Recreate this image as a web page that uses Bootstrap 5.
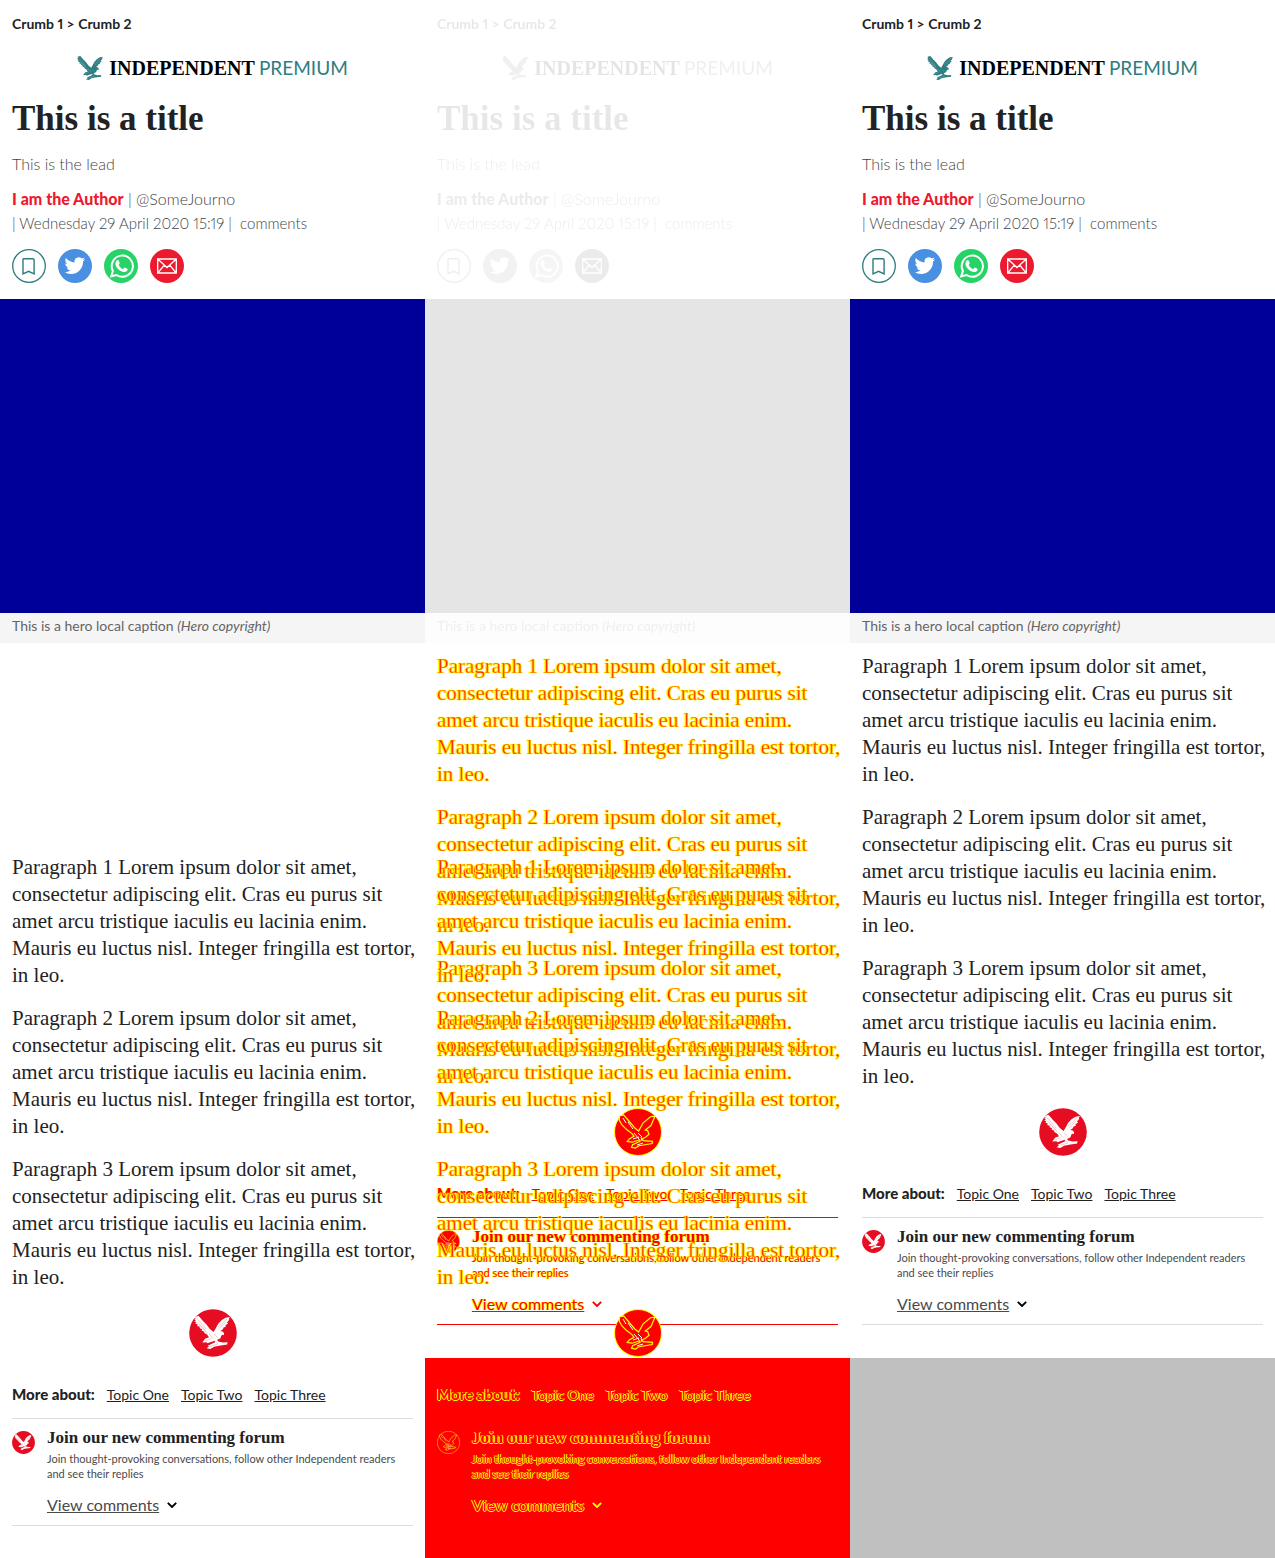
<!DOCTYPE html>
<html lang="en">
<head>
<meta charset="utf-8">
<meta name="viewport" content="width=device-width, initial-scale=1">
<title>Article page: visual comparison</title>
<link href="https://cdn.jsdelivr.net/npm/bootstrap@5.3.0/dist/css/bootstrap.min.css" rel="stylesheet">
<style>
  :root { --ink: #222; --soft: #656565; --teal: #2d7d80; --brand: #ec1a2e; --slit: #fff; }
  body { font-family: Lato, "Open Sans", sans-serif; font-size: 16px; line-height: 24px; font-variant-numeric: proportional-nums; color: var(--ink); background: #fff; }
  a { color: inherit; }
  .serif { font-family: "Liberation Serif", serif; }
  .side { padding-left: 12px; padding-right: 12px; }
  .article-top { padding-top: 12px; padding-bottom: 16px; }
  .crumbs { font-size: 14px; font-weight: 700; }
  .crumbs a, .byline a { text-decoration: none; }
  .brand-line { margin-top: 20px; height: 24px; gap: 6px; }
  .brand-line svg { width: 26px; height: 24px; fill: var(--teal); }
  .brand-name { font-size: 20px; font-weight: 700; color: #000; }
  .brand-tier { font-size: 19px; color: var(--teal); }
  .headline { margin: 19px 0 0; font-size: 35px; line-height: 40px; font-weight: 700; color: var(--ink); }
  .intro { margin: 13px 0 0; color: #444; font-weight: 300; }
  .byline { margin-top: 11px; color: #444; font-weight: 300; }
  .dateline { font-size: 15px; }
  .author { color: var(--brand); font-weight: 900; }
  .share { margin-top: 14px; gap: 12px; }
  .share button { width: 34px; height: 34px; padding: 0; border: 0; background: none; display: block; }
  .share svg { width: 34px; height: 34px; display: block; }
  .hero { aspect-ratio: 425 / 314; background: #000099; }
  .caption { padding-top: 1px; padding-bottom: 5px; background: #f5f5f5; color: var(--soft); font-size: 14px; }
  .ad-slot { height: 201px; }
  .story { padding: 10px 8px 0 12px; font-size: 21px; line-height: 27px; }
  .story p { margin: 0 0 16px; }
  .story p:last-child { margin: 0; }
  .endmark { width: 48px; height: 48px; margin: 18px auto 0; display: block; }
  .topics { margin-top: 25px; gap: 12px; font-size: 14px; }
  .topics strong { font-size: 15px; font-weight: 900; }
  .forum { margin: 11px 12px 33px; padding: 9px 0 8px; border-top: 1px solid #dcdcdc; border-bottom: 1px solid #dcdcdc; gap: 12px; }
  .forum-logo { width: 23px; height: 23px; margin-top: 3px; flex: none; }
  .forum h2 { font-size: 17px; line-height: 20px; font-weight: 700; margin: 0; }
  .forum p { margin: 3px 0 12px; font-size: 11px; line-height: 15px; color: #4a4a4a; }
  .forum button { padding: 0; border: 0; background: none; color: #4a4a4a; font-size: 16px; line-height: 24px; gap: 8px; }
  .disc { fill: #e60d22; --slit: #e60d22; }
  .filler { background: #c0c0c0; }

  /* middle column: unchanged parts are faded, changed parts red and yellow */
  .same { filter: grayscale(1); opacity: .1; }
  .stack { display: grid; }
  .stack > div { grid-area: 1 / 1; min-width: 0; }
  .changed, .changed p, .changed button { color: #f00; text-shadow: 1px 0 #ff0, -1px 0 #ff0; }
  .changed .story p { -webkit-text-stroke: 1px rgba(255, 255, 0, .5); }
  .changed .forum { border-color: #f00; }
  .changed .chev { color: #f00; stroke-width: 1px; }
  .removed { background: #f00; }
  .on-red a, .on-red .text-decoration-underline { text-decoration: none !important; }
  .on-red, .on-red p, .on-red button { color: #f00; text-shadow: 1px 0 #ff0, -1px 0 #ff0, 0 1px #ff0; }
  .on-red .chev { color: #ff0; }
</style>
<script src="https://cdn.jsdelivr.net/npm/bootstrap@5.3.0/dist/js/bootstrap.bundle.min.js"></script>
</head>
<body>
<svg width="0" height="0" class="position-absolute" aria-hidden="true">
  <symbol id="eagle" viewBox="5 7 36 33">
    <path d="M9.6 6.900 5.500 7.900 7 9.300 5.200 10 7 11.500 5.300 12.300 7.500 13.600 6.300 14.600 9 15.700 8 17 11 17.800 10.400 19 13 20.300 12.600 21.600 15 22.400 15.400 24 18 25.600 20 28.300 16 29.800 15.200 31 13.300 33.500 17.600 33.200 18.400 34.200 22 33 25.600 31.800 26.200 33.200 21.800 35.200 18.600 36.700 20 37.500 17.600 39.300 21.300 40 25 37.700 30 36.700 38.200 35.600 38.500 33.300 33.600 33.600 29.300 32.600 28 31 31.500 29.200 32.200 26.800 34 25.500 35 26.300 35.100 24.300 33.600 22.600 31.300 22 34.500 19.700 33.800 18.900 37 17.500 36.300 16.600 39 14.500 38 13.600 40.300 10.700 39.700 10 41 8.100 36.500 8.700 32.500 11.300 29.200 14.800 26.800 19.200 24.600 23 20.800 20 17.500 15.500 14 12Z" stroke="none"/>
    <path fill="none" stroke="var(--slit)" stroke-width=".45" stroke-opacity=".5" d="M8 9.500 17 20M8 12.500l9.500 10M10 15.700l8.500 8.600M38 10l-9 8M37.500 12.800 29.500 20M20 24.600l4 5M25 25l3.500 3.500M16 32l6-2.500M21 37.300l8-2.300M25.800 31.300l2.700 3"/>
  </symbol>
  <symbol id="roundel" viewBox="0 0 48 48">
    <circle cx="24" cy="24" r="23.800"/>
    <use href="#eagle" x="5" y="7" width="36" height="33" fill="#fff"/>
  </symbol>
  <!-- outline version of the roundel for the changed areas -->
  <symbol id="roundel-diff" viewBox="0 0 48 48">
    <circle cx="24" cy="24" r="23.500" fill="#f00" stroke="#ff0"/>
    <path fill="#f00" stroke="#ff0" stroke-width="1.200" d="M9.600 6.900 5.500 7.900 5.300 12.300 8 17 12.600 21.600 18 25.600 20 28.300 15.200 31 13.300 33.500 18.400 34.200 25.600 31.800 26.200 33.200 18.600 36.700 17.600 39.300 21.300 40 25 37.700 38.200 35.600 38.500 33.300 29.300 32.600 28 31 31.500 29.200 35 26.300 33.600 22.600 31.300 22 37 17.500 41 8.100 36.500 8.700 29.200 14.800 24.600 23 20.800 20 14 12Z"/>
    <path fill="none" stroke="#fff" stroke-width="1" d="m9 10 3 5m2-1 5 7m1 4 5 6m-1-6 4 4m-9 2 6-2m-2 8 6-2m-2-6 1 4"/>
  </symbol>
  <symbol id="i-save" viewBox="0 0 34 34">
    <circle cx="17" cy="17" r="16.300" fill="#fff" stroke="#2d7d80" stroke-width="1.300"/>
    <path d="M11.700 9.700h9.200q1.200 0 1.200 1.200V25l-5.500-2.700L11 25V10.400q0-.7.7-.7Z" fill="none" stroke="#2d7d80" stroke-width="1.400"/>
  </symbol>
  <symbol id="i-twitter" viewBox="0 0 34 34">
    <circle cx="17" cy="17" r="17" fill="#4a90e2"/>
    <path fill="#fff" transform="translate(6.500 6.300) scale(.86)" d="M23.950 4.570a10 10 0 0 1-2.820.77 4.960 4.960 0 0 0 2.160-2.720c-.95.550-2 .95-3.130 1.180a4.920 4.920 0 0 0-8.380 4.480C7.690 8.090 4.070 6.130 1.640 3.160a4.820 4.820 0 0 0-.67 2.480c0 1.710.87 3.210 2.190 4.100a4.900 4.900 0 0 1-2.230-.620v.060a4.920 4.920 0 0 0 3.950 4.830 5 5 0 0 1-2.210.080 4.940 4.940 0 0 0 4.600 3.420A9.870 9.870 0 0 1 0 19.540a14 14 0 0 0 7.550 2.210c9.050 0 14-7.500 14-13.980 0-.210 0-.420-.020-.630a9.940 9.940 0 0 0 2.420-2.570Z"/>
  </symbol>
  <symbol id="i-whatsapp" viewBox="0 0 34 34">
    <circle cx="17" cy="17" r="17" fill="#25d366"/>
    <path d="M7.200 27.300 8.900 22A10.600 10.600 0 1 1 12.500 26Z" fill="none" stroke="#fff" stroke-width="2"/>
    <path fill="#fff" d="M13 11.200c.5-.5 1.300-.4 1.600.2l1.100 2.500c.2.500-.9 1.500-1 2 1 2 2.400 3.300 4.400 4.100.5-.1 1.300-1.600 1.800-1.400l2.500 1.200c.4.300.1 1.600-.4 2.200-1.200 1.200-2.900 1.300-4.500.8-3.300-1.100-5.700-3.500-6.800-6.400-.6-1.800-.2-3.900 1.300-5.200Z"/>
  </symbol>
  <symbol id="i-mail" viewBox="0 0 34 34">
    <circle cx="17" cy="17" r="17" fill="#ec1a2e"/>
    <path d="M7.700 10h18.600v14H7.700ZM7.700 10l9.300 8.500 9.300-8.500M7.700 24l6.600-7.800M26.300 24l-6.600-7.800" fill="none" stroke="#fff" stroke-width="1.300"/>
  </symbol>
  <symbol id="i-chev" viewBox="0 0 10 6"><path d="m.8.800 4.200 4.200L9.200.800" fill="none" stroke="currentColor" stroke-width="1.900"/></symbol>
</svg>

<main class="row g-0">
  <!-- before -->
  <section class="col-4" aria-label="Before">
    <header class="article-top side">
      <nav class="crumbs" aria-label="Breadcrumb"><a href="#">Crumb 1</a> &gt; <a href="#">Crumb 2</a></nav>
      <div class="brand-line d-flex justify-content-center align-items-center"><svg aria-hidden="true"><use href="#eagle"/></svg><span><span class="brand-name serif">INDEPENDENT</span> <span class="brand-tier">PREMIUM</span></span></div>
      <h1 class="headline serif">This is a title</h1>
      <p class="intro">This is the lead</p>
      <div class="byline"><div><a href="#" class="author">I am the Author</a> | <a href="#">@SomeJourno</a></div><div class="dateline">| Wednesday 29 April 2020 15:19 |&nbsp; <a href="#">comments</a></div></div>
      <div class="share d-flex">
        <button type="button" aria-label="Save"><svg><use href="#i-save"/></svg></button>
        <button type="button" aria-label="Twitter"><svg><use href="#i-twitter"/></svg></button>
        <button type="button" aria-label="WhatsApp"><svg><use href="#i-whatsapp"/></svg></button>
        <button type="button" aria-label="Email"><svg><use href="#i-mail"/></svg></button>
      </div>
    </header>
    <div class="hero"></div>
    <div class="caption side">This is a hero local caption <em>(Hero copyright)</em></div>
    <div class="ad-slot"></div>
    <div class="story serif">
      <p>Paragraph 1 Lorem ipsum dolor sit amet, consectetur adipiscing elit. Cras eu purus sit amet arcu tristique iaculis eu lacinia enim. Mauris eu luctus nisl. Integer fringilla est tortor, in leo.</p>
      <p>Paragraph 2 Lorem ipsum dolor sit amet, consectetur adipiscing elit. Cras eu purus sit amet arcu tristique iaculis eu lacinia enim. Mauris eu luctus nisl. Integer fringilla est tortor, in leo.</p>
      <p>Paragraph 3 Lorem ipsum dolor sit amet, consectetur adipiscing elit. Cras eu purus sit amet arcu tristique iaculis eu lacinia enim. Mauris eu luctus nisl. Integer fringilla est tortor, in leo.</p>
    </div>
    <svg class="endmark disc" aria-hidden="true"><use href="#roundel"/></svg>
    <div class="topics side d-flex align-items-baseline"><strong>More about:</strong><a href="#">Topic One</a><a href="#">Topic Two</a><a href="#">Topic Three</a></div>
    <div class="forum d-flex">
      <svg class="forum-logo disc" aria-hidden="true"><use href="#roundel"/></svg>
      <div>
        <h2 class="serif">Join our new commenting forum</h2>
        <p>Join thought-provoking conversations, follow other Independent readers and see their replies</p>
        <button type="button" class="d-flex align-items-center"><span class="text-decoration-underline">View comments</span><svg class="chev text-black" width="10" height="6"><use href="#i-chev"/></svg></button>
      </div>
    </div>
  </section>

  <!-- difference -->
  <section class="col-4 d-flex flex-column" aria-label="Difference">
    <div class="same">
      <header class="article-top side">
        <nav class="crumbs" aria-label="Breadcrumb"><a href="#">Crumb 1</a> &gt; <a href="#">Crumb 2</a></nav>
        <div class="brand-line d-flex justify-content-center align-items-center"><svg aria-hidden="true"><use href="#eagle"/></svg><span><span class="brand-name serif">INDEPENDENT</span> <span class="brand-tier">PREMIUM</span></span></div>
        <h1 class="headline serif">This is a title</h1>
        <p class="intro">This is the lead</p>
        <div class="byline"><div><a href="#" class="author">I am the Author</a> | <a href="#">@SomeJourno</a></div><div class="dateline">| Wednesday 29 April 2020 15:19 |&nbsp; <a href="#">comments</a></div></div>
        <div class="share d-flex">
          <button type="button" aria-label="Save"><svg><use href="#i-save"/></svg></button>
          <button type="button" aria-label="Twitter"><svg><use href="#i-twitter"/></svg></button>
          <button type="button" aria-label="WhatsApp"><svg><use href="#i-whatsapp"/></svg></button>
          <button type="button" aria-label="Email"><svg><use href="#i-mail"/></svg></button>
        </div>
      </header>
      <div class="hero"></div>
      <div class="caption side">This is a hero local caption <em>(Hero copyright)</em></div>
    </div>
    <div class="stack flex-grow-1">
      <div class="changed d-flex flex-column">
        <div class="story serif">
          <p>Paragraph 1 Lorem ipsum dolor sit amet, consectetur adipiscing elit. Cras eu purus sit amet arcu tristique iaculis eu lacinia enim. Mauris eu luctus nisl. Integer fringilla est tortor, in leo.</p>
          <p>Paragraph 2 Lorem ipsum dolor sit amet, consectetur adipiscing elit. Cras eu purus sit amet arcu tristique iaculis eu lacinia enim. Mauris eu luctus nisl. Integer fringilla est tortor, in leo.</p>
          <p>Paragraph 3 Lorem ipsum dolor sit amet, consectetur adipiscing elit. Cras eu purus sit amet arcu tristique iaculis eu lacinia enim. Mauris eu luctus nisl. Integer fringilla est tortor, in leo.</p>
        </div>
        <svg class="endmark" aria-hidden="true"><use href="#roundel-diff"/></svg>
        <div class="topics side d-flex align-items-baseline"><strong>More about:</strong><a href="#">Topic One</a><a href="#">Topic Two</a><a href="#">Topic Three</a></div>
        <div class="forum d-flex">
          <svg class="forum-logo" aria-hidden="true"><use href="#roundel-diff"/></svg>
          <div>
            <h2 class="serif">Join our new commenting forum</h2>
            <p>Join thought-provoking conversations, follow other Independent readers and see their replies</p>
            <button type="button" class="d-flex align-items-center"><span class="text-decoration-underline">View comments</span><svg class="chev" width="10" height="6"><use href="#i-chev"/></svg></button>
          </div>
        </div>
        <div class="removed flex-grow-1"></div>
      </div>
      <div class="changed">
        <div class="ad-slot"></div>
        <div class="story serif">
          <p>Paragraph 1 Lorem ipsum dolor sit amet, consectetur adipiscing elit. Cras eu purus sit amet arcu tristique iaculis eu lacinia enim. Mauris eu luctus nisl. Integer fringilla est tortor, in leo.</p>
          <p>Paragraph 2 Lorem ipsum dolor sit amet, consectetur adipiscing elit. Cras eu purus sit amet arcu tristique iaculis eu lacinia enim. Mauris eu luctus nisl. Integer fringilla est tortor, in leo.</p>
          <p>Paragraph 3 Lorem ipsum dolor sit amet, consectetur adipiscing elit. Cras eu purus sit amet arcu tristique iaculis eu lacinia enim. Mauris eu luctus nisl. Integer fringilla est tortor, in leo.</p>
        </div>
        <svg class="endmark" aria-hidden="true"><use href="#roundel-diff"/></svg>
        <div class="on-red">
          <div class="topics side d-flex align-items-baseline"><strong>More about:</strong><a href="#">Topic One</a><a href="#">Topic Two</a><a href="#">Topic Three</a></div>
          <div class="forum d-flex">
            <svg class="forum-logo" aria-hidden="true"><use href="#roundel-diff"/></svg>
            <div>
              <h2 class="serif">Join our new commenting forum</h2>
              <p>Join thought-provoking conversations, follow other Independent readers and see their replies</p>
              <button type="button" class="d-flex align-items-center"><span class="text-decoration-underline">View comments</span><svg class="chev" width="10" height="6"><use href="#i-chev"/></svg></button>
            </div>
          </div>
        </div>
      </div>
    </div>
  </section>

  <!-- after -->
  <section class="col-4 d-flex flex-column" aria-label="After">
    <header class="article-top side">
      <nav class="crumbs" aria-label="Breadcrumb"><a href="#">Crumb 1</a> &gt; <a href="#">Crumb 2</a></nav>
      <div class="brand-line d-flex justify-content-center align-items-center"><svg aria-hidden="true"><use href="#eagle"/></svg><span><span class="brand-name serif">INDEPENDENT</span> <span class="brand-tier">PREMIUM</span></span></div>
      <h1 class="headline serif">This is a title</h1>
      <p class="intro">This is the lead</p>
      <div class="byline"><div><a href="#" class="author">I am the Author</a> | <a href="#">@SomeJourno</a></div><div class="dateline">| Wednesday 29 April 2020 15:19 |&nbsp; <a href="#">comments</a></div></div>
      <div class="share d-flex">
        <button type="button" aria-label="Save"><svg><use href="#i-save"/></svg></button>
        <button type="button" aria-label="Twitter"><svg><use href="#i-twitter"/></svg></button>
        <button type="button" aria-label="WhatsApp"><svg><use href="#i-whatsapp"/></svg></button>
        <button type="button" aria-label="Email"><svg><use href="#i-mail"/></svg></button>
      </div>
    </header>
    <div class="hero"></div>
    <div class="caption side">This is a hero local caption <em>(Hero copyright)</em></div>
    <div class="story serif">
      <p>Paragraph 1 Lorem ipsum dolor sit amet, consectetur adipiscing elit. Cras eu purus sit amet arcu tristique iaculis eu lacinia enim. Mauris eu luctus nisl. Integer fringilla est tortor, in leo.</p>
      <p>Paragraph 2 Lorem ipsum dolor sit amet, consectetur adipiscing elit. Cras eu purus sit amet arcu tristique iaculis eu lacinia enim. Mauris eu luctus nisl. Integer fringilla est tortor, in leo.</p>
      <p>Paragraph 3 Lorem ipsum dolor sit amet, consectetur adipiscing elit. Cras eu purus sit amet arcu tristique iaculis eu lacinia enim. Mauris eu luctus nisl. Integer fringilla est tortor, in leo.</p>
    </div>
    <svg class="endmark disc" aria-hidden="true"><use href="#roundel"/></svg>
    <div class="topics side d-flex align-items-baseline"><strong>More about:</strong><a href="#">Topic One</a><a href="#">Topic Two</a><a href="#">Topic Three</a></div>
    <div class="forum d-flex">
      <svg class="forum-logo disc" aria-hidden="true"><use href="#roundel"/></svg>
      <div>
        <h2 class="serif">Join our new commenting forum</h2>
        <p>Join thought-provoking conversations, follow other Independent readers and see their replies</p>
        <button type="button" class="d-flex align-items-center"><span class="text-decoration-underline">View comments</span><svg class="chev text-black" width="10" height="6"><use href="#i-chev"/></svg></button>
      </div>
    </div>
    <div class="filler flex-grow-1"></div>
  </section>
</main>
</body>
</html>
